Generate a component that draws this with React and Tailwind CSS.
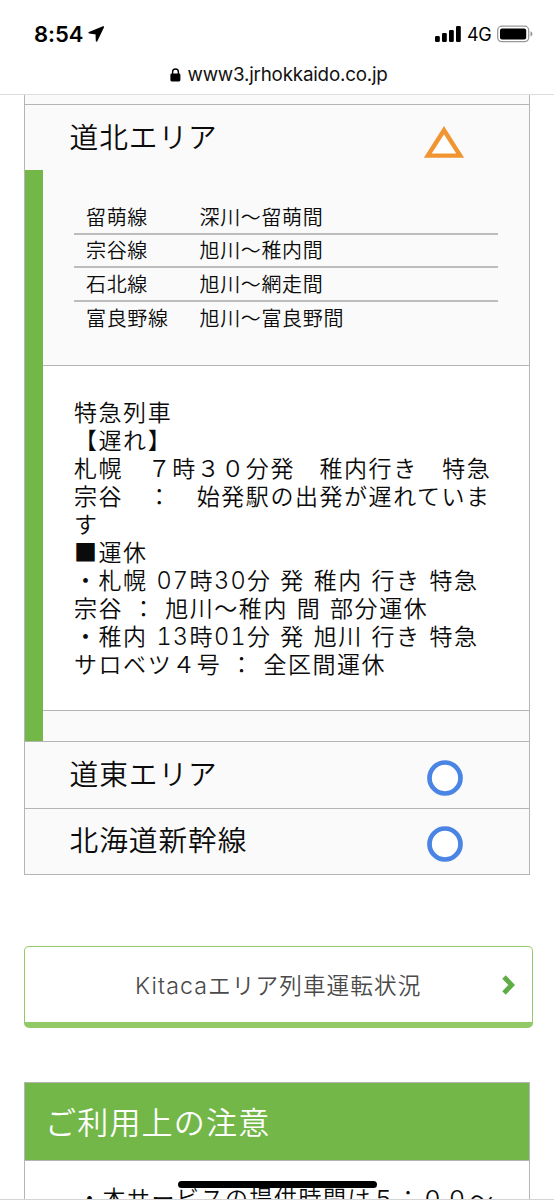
const routes = [
  { line: '留萌線', section: '深川〜留萌間' },
  { line: '宗谷線', section: '旭川〜稚内間' },
  { line: '石北線', section: '旭川〜網走間' },
  { line: '富良野線', section: '旭川〜富良野間' },
]

const notices = [
  '特急列車',
  '【遅れ】',
  '札幌　７時３０分発　稚内行き　特急',
  '宗谷　：　始発駅の出発が遅れていま',
  'す',
  '■運休',
  '・札幌 07時30分 発 稚内 行き 特急',
  '宗谷 ： 旭川〜稚内 間 部分運休',
  '・稚内 13時01分 発 旭川 行き 特急',
  'サロベツ４号 ： 全区間運休',
]

// half-width digits use a wider latin face than the kanji font's own
function NoticeLine({ text }) {
  return (
    <p className="h-[28px] whitespace-pre">
      {text.split(/([0-9]+)/).map((part, i) =>
        /^[0-9]+$/.test(part) ? (
          <span
            key={i}
            className="inline-block w-[33px] font-['Inter','Liberation_Sans',sans-serif] text-[23.5px] leading-[20px] font-light tracking-[1.2px] tabular-nums"
          >
            {part}
          </span>
        ) : (
          part
        )
      )}
    </p>
  )
}

function StatusBar() {
  return (
    <div className="flex h-[56px] items-end justify-between pr-[21px] pl-[34px] font-['Inter','Liberation_Sans',sans-serif] font-normal text-black">
      <div className="flex h-[44px] items-center gap-[5px]">
        <span className="text-[22px] font-semibold tracking-[-0.1px]">8:54</span>
        <svg width="17" height="16" viewBox="0 0 17 16" className="mb-px">
          <path d="M15.3 1 1.2 6.8l7.1.9.3 7.2z" fill="#000" stroke="#000" strokeWidth="1.6" strokeLinejoin="round" />
        </svg>
      </div>
      <div className="flex h-[44px] items-center">
        <svg width="26" height="16" viewBox="0 0 26 16">
          <rect x="0" y="10" width="4.8" height="6" rx="1.3" />
          <rect x="7" y="7" width="4.8" height="9" rx="1.3" />
          <rect x="14" y="4" width="4.8" height="12" rx="1.3" />
          <rect x="21" y="0" width="4.8" height="16" rx="1.3" />
        </svg>
        <span className="ml-[6px] w-[25px] text-[18px] tracking-[-0.4px]">4G</span>
        <svg width="36" height="18" viewBox="0 0 36 18" className="ml-[5px]">
          <rect x=".7" y="1.2" width="31" height="15.4" rx="4" fill="none" stroke="#999" strokeWidth="1.3" />
          <rect x="3" y="3.5" width="26.2" height="11" rx="2" />
          <path d="M33.5 6.2q2 .8 2 2.7t-2 2.7z" fill="#999" />
        </svg>
      </div>
    </div>
  )
}

function AddressBar() {
  return (
    <div className="flex h-[38px] items-center pl-[170px] font-['Inter','Liberation_Sans',sans-serif] font-normal">
      <svg width="11" height="14" viewBox="0 0 11 14" className="mb-px">
        <path d="M2.6 6V3.9a2.9 2.9 0 0 1 5.8 0V6" fill="none" stroke="#000" strokeWidth="1.4" />
        <rect x=".4" y="5.6" width="10" height="7.8" rx="1.3" />
      </svg>
      <span className="ml-[6.5px] text-[18.8px] tracking-[-0.2px] text-[#111]">www3.jrhokkaido.co.jp</span>
    </div>
  )
}

function Triangle() {
  return (
    <svg width="40" height="34" viewBox="0 0 40 34">
      <path d="M20 5.2 36.2 30.6H3.8z" fill="#fff" stroke="#f09530" strokeWidth="4.4" />
    </svg>
  )
}

function Circle() {
  return (
    <svg width="36" height="36" viewBox="0 0 36 36">
      <circle cx="18" cy="18" r="15.5" fill="#fff" stroke="#4a84e4" strokeWidth="4.7" />
    </svg>
  )
}

function AreaHeader({ name, children }) {
  return (
    <div className="flex h-[65px] items-center justify-between pb-[2px] pl-[44.5px] text-[28.7px] tracking-[0.95px]">
      <span className="mb-[2px]">{name}</span>
      {children}
    </div>
  )
}

export default function App() {
  return (
    <div className="flex h-[1200px] w-[554px] flex-col overflow-hidden border-b border-[#d4d4d4] bg-white font-['Noto_Sans_CJK_JP',sans-serif] font-[350] text-[#0b0b0b]">
      <header className="h-[95px] shrink-0 border-b border-[#dedede]">
        <StatusBar />
        <AddressBar />
      </header>

      <main className="flex min-h-0 flex-1 flex-col">
        <section className="ml-[24px] w-[506px] shrink-0 border-x border-b border-[#b5b5b5] bg-[#fafafa]">
          <div className="h-[9px]" />
          <div className="border-t border-[#b5b5b5]">
            <AreaHeader name="道北エリア">
              <div className="mt-[10px] mr-[65px]">
                <Triangle />
              </div>
            </AreaHeader>
          </div>

          <div className="border-l-[18px] border-[#72b748]">
            <div className="h-[195px] pt-[31px] pr-[31px] pl-[31px]">
              <div className="divide-y-2 divide-[#bdbdbd] text-[20px] tracking-[0.65px]">
                {routes.map(route => (
                  <div key={route.line} className="flex h-[33.5px] items-center pl-[12px]">
                    <span className="w-[113.5px]">{route.line}</span>
                    <span>{route.section}</span>
                  </div>
                ))}
              </div>
            </div>
            <div className="h-[346px] border-y border-[#b5b5b5] bg-white pt-[31px] pl-[31px] text-[23px] leading-[28px] tracking-[1.55px] [word-spacing:2.1px]">
              {notices.map(text => (
                <NoticeLine key={text} text={text} />
              ))}
            </div>
            <div className="h-[30px]" />
          </div>

          {['道東エリア', '北海道新幹線'].map(name => (
            <div key={name} className="h-[66.5px] border-t border-[#b5b5b5]">
              <AreaHeader name={name}>
                <div className="mt-[8px] mr-[66px]">
                  <Circle />
                </div>
              </AreaHeader>
            </div>
          ))}
        </section>

        <a className="mt-[71px] ml-[24px] flex h-[82px] w-[509px] shrink-0 items-center justify-between rounded-[5px] border border-b-[6px] border-[#93ca68] pr-[17px] pl-[110px] text-[22.6px] tracking-[1.1px] text-[#4a4a4a]">
          <span className="mt-[2px]">
            <span className="font-['Inter','Liberation_Sans',sans-serif] text-[23.2px] font-light tracking-[1.1px]">Kitaca</span>
            エリア列車運転状況
          </span>
          <svg width="13" height="20" viewBox="0 0 13 20">
            <path d="m2 2 7.7 8L2 18" fill="none" stroke="#5fad46" strokeWidth="4.8" />
          </svg>
        </a>

        <section className="mt-[54px] ml-[24px] w-[506px] shrink-0 border border-[#b5b5b5]">
          <h2 className="flex h-[78px] items-center border-b border-[#b5b5b5] bg-[#72b748] pb-px pl-[20px] text-[31px] tracking-[1.2px] text-white">
            ご利用上の注意
          </h2>
          <div className="h-[60px] pt-[20px] pl-[53px] text-[23px] leading-[32px] tracking-[1.5px] whitespace-nowrap">
            ・本サービスの提供時間は５：００～
          </div>
        </section>
      </main>

      {/* Home indicator */}
      <div className="fixed top-[1181px] left-[178px] h-[7px] w-[199px] rounded-full bg-black" />
    </div>
  )
}
